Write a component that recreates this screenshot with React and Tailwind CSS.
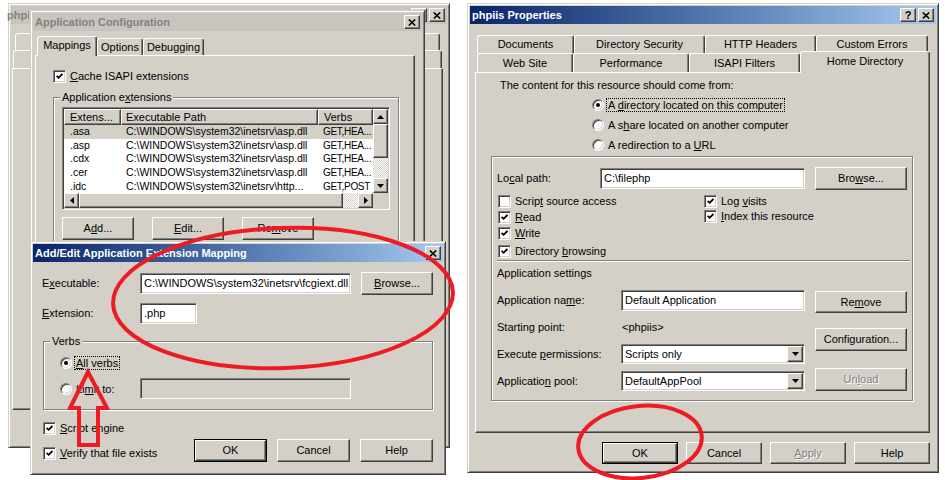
import React from 'react';

const face = 'bg-[#d4d0c8]';
const raised =
  'border border-t-white border-l-white border-r-[#404040] border-b-[#404040] shadow-[inset_-1px_-1px_0_#808080]';
const sunken =
  'border border-t-[#808080] border-l-[#808080] border-r-white border-b-white shadow-[inset_1px_1px_0_#404040,inset_-1px_-1px_0_#d4d0c8]';
const frame =
  'border border-t-[#d4d0c8] border-l-[#d4d0c8] border-r-[#404040] border-b-[#404040] shadow-[inset_1px_1px_0_#fff,inset_-1px_-1px_0_#808080] bg-[#d4d0c8]';
const etched = 'border border-[#808080] shadow-[inset_1px_1px_0_#fff,1px_1px_0_#fff]';
const tab =
  'flex items-center justify-center border-t border-l border-r border-t-white border-l-white border-r-[#404040] rounded-t-[3px] shadow-[inset_-1px_0_0_#808080] bg-[#d4d0c8]';
const disabledText = 'text-[#808080] [text-shadow:1px_1px_0_#fff]';

function Btn({ children, className = '', def, disabled }) {
  const inner = (
    <div className={`flex h-full w-full items-center justify-center ${face} ${raised} ${disabled ? disabledText : ''}`}>
      {children}
    </div>
  );
  if (def) return <div className={`border border-black ${className}`}>{inner}</div>;
  return <div className={className}>{inner}</div>;
}

function CapBtn({ children }) {
  return (
    <div className={`flex h-[14px] w-[16px] items-center justify-center ${face} ${raised} text-black`}>
      {children}
    </div>
  );
}

function CloseGlyph() {
  return (
    <svg width="8" height="7" viewBox="0 0 8 7">
      <path d="M0.8 0.5 L7.2 6.5 M7.2 0.5 L0.8 6.5" stroke="#000" strokeWidth="1.6" fill="none" />
    </svg>
  );
}

function TitleBar({ title, active, help, clip }) {
  return (
    <div
      className={`flex h-[18px] items-center justify-between pl-[2px] pr-[2px] font-bold ${
        active ? 'bg-linear-to-r from-[#0a246a] to-[#a6caf0] text-white' : 'bg-[#c9c5be] text-[#828282]'
      }`}
    >
      <span className={`whitespace-nowrap ${clip ? '-ml-[6px] w-[22px] overflow-hidden' : ''}`}>{title}</span>
      <div className="flex gap-[2px]">
        {help && (
          <CapBtn>
            <span className="text-[11px] font-bold leading-none">?</span>
          </CapBtn>
        )}
        <CapBtn>
          <CloseGlyph />
        </CapBtn>
      </div>
    </div>
  );
}

function Check({ checked, children, className = '' }) {
  return (
    <div className={`flex h-[13px] items-center ${className}`}>
      <div className={`flex h-[13px] w-[13px] shrink-0 items-center justify-center bg-white ${sunken}`}>
        {checked && (
          <svg width="7" height="7" viewBox="0 0 7 7">
            <path d="M0.6 2.8 L2.6 4.8 L6.4 1" stroke="#000" strokeWidth="1.8" fill="none" />
          </svg>
        )}
      </div>
      <span className="ml-[4px] whitespace-nowrap">{children}</span>
    </div>
  );
}

function Radio({ checked, children, focus, className = '' }) {
  return (
    <div className={`flex items-center ${className}`}>
      <div className="flex h-[12px] w-[12px] shrink-0 items-center justify-center rounded-full border border-t-[#808080] border-l-[#808080] border-r-white border-b-white bg-white shadow-[inset_1px_1px_0_#404040,inset_-1px_-1px_0_#d4d0c8]">
        {checked && <div className="h-[4px] w-[4px] rounded-full bg-black" />}
      </div>
      <span
        className={`ml-[2px] whitespace-nowrap border px-[1px] leading-[12px] ${
          focus ? 'border-dotted border-black' : 'border-transparent'
        }`}
      >
        {children}
      </span>
    </div>
  );
}

function Field({ children, className = '', disabled }) {
  return (
    <div className={`flex items-center px-[3px] whitespace-nowrap ${disabled ? face : 'bg-white'} ${sunken} ${className}`}>
      {children}
    </div>
  );
}

function Select({ children, className = '' }) {
  return (
    <div className={`flex items-center bg-white pl-[3px] pr-[1px] ${sunken} ${className}`}>
      <span className="flex-1 whitespace-nowrap">{children}</span>
      <div className={`flex h-[16px] w-[16px] items-center justify-center ${face} ${raised}`}>
        <svg width="7" height="4" viewBox="0 0 7 4">
          <path d="M0 0 H7 L3.5 4 Z" fill="#000" />
        </svg>
      </div>
    </div>
  );
}

function Group({ label, className = '', children }) {
  return (
    <div className={`relative ${etched} ${className}`}>
      {label && (
        <span className={`absolute -top-[7px] left-[6px] px-[2px] leading-[13px] ${face}`}>{label}</span>
      )}
      {children}
    </div>
  );
}

function Arrow({ dir }) {
  const d = {
    up: 'M0 4 L3.5 0 L7 4 Z',
    down: 'M0 0 H7 L3.5 4 Z',
    left: 'M4 0 V7 L0 3.5 Z',
    right: 'M0 0 V7 L4 3.5 Z',
  }[dir];
  const vert = dir === 'up' || dir === 'down';
  return (
    <div className={`flex h-[15px] w-[15px] shrink-0 items-center justify-center ${face} ${raised}`}>
      <svg width={vert ? 7 : 4} height={vert ? 4 : 7} viewBox={vert ? '0 0 7 4' : '0 0 4 7'}>
        <path d={d} fill="#000" />
      </svg>
    </div>
  );
}

const dither = 'bg-[repeating-conic-gradient(#fff_0%_25%,#d4d0c8_0%_50%)] bg-[length:2px_2px]';

const mappings = [
  ['.asa', 'C:\\WINDOWS\\system32\\inetsrv\\asp.dll', 'GET,HEA...', true],
  ['.asp', 'C:\\WINDOWS\\system32\\inetsrv\\asp.dll', 'GET,HEA...'],
  ['.cdx', 'C:\\WINDOWS\\system32\\inetsrv\\asp.dll', 'GET,HEA...'],
  ['.cer', 'C:\\WINDOWS\\system32\\inetsrv\\asp.dll', 'GET,HEA...'],
  ['.idc', 'C:\\WINDOWS\\system32\\inetsrv\\http...', 'GET,POST'],
];

function MappingList() {
  return (
    <div className={`flex h-[103px] w-[328px] flex-col bg-white p-[1px] ${sunken}`}>
      <div className="flex h-[84px]">
        <div className="flex flex-1 flex-col overflow-hidden">
          <div className="flex h-[16px] shrink-0">
            <div className={`flex w-[57px] shrink-0 items-center pl-[5px] ${face} ${raised}`}>Extens...</div>
            <div className={`flex w-[197px] shrink-0 items-center pl-[4px] ${face} ${raised}`}>Executable Path</div>
            <div className={`flex flex-1 items-center pl-[5px] ${face} ${raised}`}>Verbs</div>
          </div>
          {mappings.map(([ext, path, verbs, sel]) => (
            <div key={ext} className={`flex h-[13.6px] items-center text-[10.5px] ${sel ? 'bg-[#d4d0c8]' : ''}`}>
              <span className="w-[57px] shrink-0 pl-[6px]">{ext}</span>
              <span className="w-[197px] shrink-0 pl-[5px] whitespace-nowrap">{path}</span>
              <span className="pl-[5px] text-[10px] tracking-[-0.3px] whitespace-nowrap">{verbs}</span>
            </div>
          ))}
        </div>
        <div className="flex w-[15px] flex-col">
          <Arrow dir="up" />
          <div className={`h-[34px] ${face} ${raised}`} />
          <div className={`flex-1 ${dither}`} />
          <Arrow dir="down" />
        </div>
      </div>
      <div className="flex h-[15px]">
        <Arrow dir="left" />
        <div className={`w-[264px] ${face} ${raised}`} />
        <div className={`flex-1 ${dither}`} />
        <Arrow dir="right" />
        <div className={`w-[15px] ${face}`} />
      </div>
    </div>
  );
}

function BackWindow() {
  return (
    <div className={`absolute left-[8px] top-[3px] h-[445px] w-[442px] p-[2px] ${frame}`}>
      <TitleBar title="phpi" help clip />
      <div className="pt-[9px]">
        <div className={`ml-[4px] h-[17px] w-[425px] ${tab}`} />
        <div className={`ml-[2px] h-[18px] w-[429px] ${tab}`} />
        <div className={`ml-[1px] h-[342px] w-[431px] ${raised}`} />
      </div>
    </div>
  );
}

function AppConfig() {
  return (
    <div className={`absolute left-[30px] top-[10px] h-[400px] w-[395px] p-[2px] ${frame}`}>
      <TitleBar title="Application Configuration" />
      <div className="px-[2px] pt-[5px]">
        <div className="flex h-[19px] items-end pl-[2px]">
          <div className={`relative z-10 -mb-[1px] h-[20px] w-[60px] pb-[2px] ${tab}`}>Mappings</div>
          <div className={`h-[17px] w-[46px] ${tab}`}>Options</div>
          <div className={`h-[17px] w-[61px] ${tab}`}>Debugging</div>
        </div>
        <div className={`h-[345px] w-[380px] pl-[17px] pt-[14px] ${raised}`}>
          <Check checked>
            <u>C</u>ache ISAPI extensions
          </Check>
          <Group
            className="mt-[14px] h-[170px] w-[346px] pl-[8px] pt-[9px]"
            label={
              <>
                Application e<u>x</u>tensions
              </>
            }
          >
            <MappingList />
            <div className="mt-[7px] flex gap-[18px]">
              <Btn className="h-[23px] w-[72px]">
                A<u>d</u>d...
              </Btn>
              <Btn className="h-[23px] w-[72px]">
                <u>E</u>dit...
              </Btn>
              <Btn className="h-[23px] w-[72px]">
                Re<u>m</u>ove
              </Btn>
            </div>
          </Group>
        </div>
      </div>
    </div>
  );
}

function AddEditDialog() {
  return (
    <div className={`absolute left-[30px] top-[241px] h-[234px] w-[416px] p-[2px] ${frame}`}>
      <TitleBar title="Add/Edit Application Extension Mapping" active />
      <div className="pl-[9px] pr-[10px] pt-[10px]">
        <div className="flex h-[23px] items-center">
          <span className="w-[98px]">
            E<u>x</u>ecutable:
          </span>
          <Field className="h-[21px] w-[211px]">C:\WINDOWS\system32\inetsrv\fcgiext.dll</Field>
          <Btn className="ml-[10px] h-[23px] w-[72px]">
            <u>B</u>rowse...
          </Btn>
        </div>
        <div className="mt-[8px] flex h-[21px] items-center">
          <span className="w-[98px]">
            <u>E</u>xtension:
          </span>
          <Field className="h-[21px] w-[57px]">.php</Field>
        </div>
        <Group label="Verbs" className="ml-[1px] mt-[17px] h-[69px] w-[390px] pl-[16px] pt-[14px]">
          <Radio checked focus className="h-[13px]">
            <u>A</u>ll verbs
          </Radio>
          <div className="mt-[9px] flex h-[21px] items-center">
            <Radio className="w-[80px]">
              Li<u>m</u>it to:
            </Radio>
            <Field disabled className="h-[21px] w-[211px]" />
          </div>
        </Group>
        <div className="ml-[1px] mt-[12px] flex items-start">
          <div>
            <Check checked>
              <u>S</u>cript engine
            </Check>
            <Check checked className="mt-[12px]">
              <u>V</u>erify that file exists
            </Check>
          </div>
          <div className="ml-auto mt-[17px] flex gap-[10px]">
            <Btn def className="h-[23px] w-[73px]">
              OK
            </Btn>
            <Btn className="h-[23px] w-[73px]">Cancel</Btn>
            <Btn className="h-[23px] w-[73px]">Help</Btn>
          </div>
        </div>
      </div>
    </div>
  );
}

function PropertiesDialog() {
  return (
    <div className={`absolute left-[467px] top-[3px] h-[470px] w-[472px] p-[2px] ${frame}`}>
      <TitleBar title="phpiis Properties" active help />
      <div className="pl-[5px] pt-[11px]">
        <div className="flex h-[18px] pl-[2px]">
          <div className={`w-[97px] ${tab}`}>Documents</div>
          <div className={`w-[131px] ${tab}`}>Directory Security</div>
          <div className={`w-[111px] ${tab}`}>HTTP Headers</div>
          <div className={`w-[112px] ${tab}`}>Custom Errors</div>
        </div>
        <div className="flex h-[19px] items-end pl-[2px]">
          <div className={`h-[19px] w-[96px] ${tab}`}>Web Site</div>
          <div className={`h-[19px] w-[116px] ${tab}`}>Performance</div>
          <div className={`h-[19px] w-[111px] ${tab}`}>ISAPI Filters</div>
          <div className={`relative z-10 -mb-[1px] h-[22px] w-[130px] pb-[2px] ${tab}`}>Home Directory</div>
        </div>
        <div className={`h-[361px] w-[455px] pt-[6px] ${raised}`}>
          <div className="pl-[24px] leading-[13px]">The content for this resource should come from:</div>
          <div className="ml-[116px] mt-[6px] flex flex-col gap-[6px]">
            <Radio checked focus className="h-[14px]">
              A <u>d</u>irectory located on this computer
            </Radio>
            <Radio className="h-[14px]">
              A s<u>h</u>are located on another computer
            </Radio>
            <Radio className="h-[14px]">
              A redirection to a <u>U</u>RL
            </Radio>
          </div>
          <Group className="ml-[15px] mt-[4px] h-[245px] w-[422px] pl-[5px] pt-[10px]">
            <div className="flex h-[23px] items-center">
              <span className="w-[103px]">
                Lo<u>c</u>al path:
              </span>
              <Field className="h-[21px] w-[205px]">C:\filephp</Field>
              <Btn className="ml-[10px] h-[23px] w-[92px]">
                Bro<u>w</u>se...
              </Btn>
            </div>
            <div className="mt-[5px] flex pl-[1px]">
              <div className="flex w-[206px] flex-col">
                <Check>
                  Scrip<u>t</u> source access
                </Check>
                <Check checked className="mt-[3px]">
                  <u>R</u>ead
                </Check>
                <Check checked className="mt-[3px]">
                  <u>W</u>rite
                </Check>
                <Check checked className="mt-[5px]">
                  Directory <u>b</u>rowsing
                </Check>
              </div>
              <div className="flex flex-col">
                <Check checked>
                  Log <u>v</u>isits
                </Check>
                <Check checked className="mt-[2px]">
                  <u>I</u>ndex this resource
                </Check>
              </div>
            </div>
            <div className="mt-[2px] w-[413px] border-t border-b border-t-[#808080] border-b-white" />
            <div className="mt-[5px] leading-[13px]">Application settings</div>
            <div className="mt-[10px] flex">
              <div className="w-[308px]">
                <div className="flex h-[21px] items-center">
                  <span className="w-[124px]">
                    Application na<u>m</u>e:
                  </span>
                  <Field className="h-[21px] w-[184px]">Default Application</Field>
                </div>
                <div className="mt-[6px] flex h-[21px] items-center">
                  <span className="w-[125px]">Starting point:</span>
                  <span>&lt;phpiis&gt;</span>
                </div>
                <div className="mt-[6px] flex h-[20px] items-center">
                  <span className="w-[124px]">
                    Execute <u>p</u>ermissions:
                  </span>
                  <Select className="h-[20px] w-[184px]">Scripts only</Select>
                </div>
                <div className="mt-[7px] flex h-[20px] items-center">
                  <span className="w-[124px]">
                    Applicatio<u>n</u> pool:
                  </span>
                  <Select className="h-[20px] w-[184px]">DefaultAppPool</Select>
                </div>
              </div>
              <div className="ml-[10px] flex w-[92px] flex-col">
                <Btn className="mt-[1px] h-[22px] w-[92px]">
                  Re<u>m</u>ove
                </Btn>
                <Btn className="mt-[15px] h-[23px] w-[92px]">Configuration...</Btn>
                <Btn disabled className="mt-[17px] h-[23px] w-[92px]">
                  Un<u>l</u>oad
                </Btn>
              </div>
            </div>
          </Group>
        </div>
        <div className="mt-[9px] flex w-[455px] justify-end gap-[8px]">
          <Btn def className="h-[22px] w-[76px]">
            OK
          </Btn>
          <Btn className="h-[22px] w-[76px]">Cancel</Btn>
          <Btn disabled className="h-[22px] w-[76px]">
            <u>A</u>pply
          </Btn>
          <Btn className="h-[22px] w-[76px]">Help</Btn>
        </div>
      </div>
    </div>
  );
}

export default function App() {
  return (
    <div className="relative h-[480px] w-[945px] overflow-hidden bg-white font-['Liberation_Sans',Arial,sans-serif] text-[11px] leading-[13px] text-black">
      <BackWindow />
      <AppConfig />
      <AddEditDialog />
      <PropertiesDialog />

      {/* red markup drawn over the screenshots */}
      <svg className="pointer-events-none absolute inset-0" width="945" height="480" viewBox="0 0 945 480">
        <ellipse cx="283" cy="298" rx="170" ry="70" transform="rotate(-2 283 298)" fill="none" stroke="#ed1c24" strokeWidth="4" />
        <ellipse cx="640" cy="442" rx="62" ry="36" transform="rotate(-6 640 442)" fill="none" stroke="#ed1c24" strokeWidth="4" />
        <polygon points="88,372 107,408 98,408 98,445 79,445 79,408 70,408" fill="none" stroke="#ed1c24" strokeWidth="4" strokeLinejoin="miter" />
      </svg>
    </div>
  );
}
